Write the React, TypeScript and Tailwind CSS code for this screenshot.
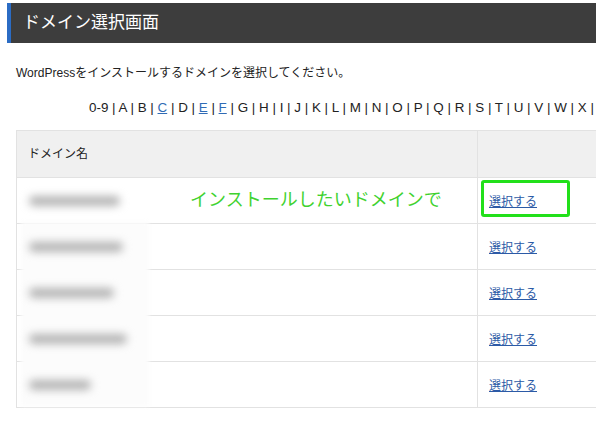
const letters = ["A","B","C","D","E","F","G","H","I","J","K","L","M","N","O","P","Q","R","S","T","U","V","W","X","Y","Z"];
const linked = ["C", "E", "F"];
const domains = [91, 94, 85, 98, 62];

export default function App() {
  return (
    <div className="relative h-[421px] w-[596px] overflow-hidden bg-white font-['Liberation_Sans','Noto_Sans_CJK_JP',sans-serif] text-[#222]">
      <div className="w-[680px]">
        <div className="ml-[7px] mt-[3px] flex h-[40px] items-center border-l-4 border-[#2b6cc4] bg-[#3d3d3d] pl-3">
          <h1 className="text-[17px] text-white">ドメイン選択画面</h1>
        </div>

        <p className="ml-4 mt-[21px] text-[12px] leading-[18px]">
          WordPressをインストールするドメインを選択してください。
        </p>

        <div className="mt-[17px] whitespace-nowrap pl-[89px] text-[13.4px] leading-[18px] text-[#222]">
          <span>0-9</span>
          {letters.map((l) => (
            <span key={l}>
              {" | "}
              {linked.includes(l) ? (
                <a href="#" className="text-[#2f6bb5] underline">{l}</a>
              ) : (
                l
              )}
            </span>
          ))}
        </div>

        <div className="relative ml-4 mt-[13px] border border-[#e2e2e2]">
          <div className="flex h-[46px] bg-[#f0f0f0] text-[12px]">
            <div className="flex w-[460px] items-center pl-[11px]">ドメイン名</div>
            <div className="flex-1 border-l border-[#e2e2e2]" />
          </div>
          {domains.map((w, i) => (
            <div key={i} className="flex h-[46px] border-t border-[#e2e2e2]">
              <div className="flex w-[460px] items-center pl-[12px]">
                <span
                  className="relative z-10 h-[10px] rounded-full bg-[#b4b4b4] blur-[4px]"
                  style={{ width: w }}
                />
                {i === 0 && (
                  <span className="ml-[70px] text-[18px] text-[#3fd22f]">
                    インストールしたいドメインで
                  </span>
                )}
              </div>
              <div className="flex flex-1 items-center border-l border-[#e2e2e2] pl-[11px]">
                <span className="relative">
                  <a href="#" className="text-[12px] leading-[18px] text-[#2c5aa6] underline">
                    選択する
                  </a>
                  {i === 0 && (
                    <span className="absolute left-[-8px] top-[-9px] h-[37px] w-[89px] rounded-[3px] border-[3px] border-[#22e01a]" />
                  )}
                </span>
              </div>
            </div>
          ))}
          <div className="absolute left-[4px] top-[91px] h-[184px] w-[128px] bg-[#fcfcfc] blur-[2px]" />
        </div>
      </div>
    </div>
  );
}
